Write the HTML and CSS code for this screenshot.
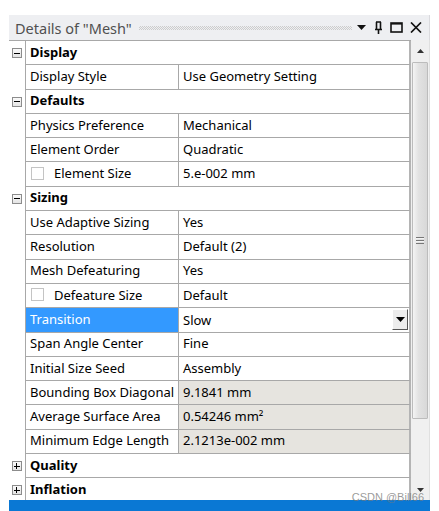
FILE: index.html
```html
<!DOCTYPE html>
<html>
<head>
<meta charset="utf-8">
<link rel="stylesheet" href="styles.css">
</head>
<body>
<div class="panel">
  <div class="titlebar">
    <span class="title">Details of "Mesh"</span>
    <span class="grip"></span>
    <span class="tb-icons">
      <svg class="ic-drop" width="9" height="5" viewBox="0 0 9 5"><path d="M0 0H9L4.5 5Z" fill="#111"/></svg>
      <svg class="ic-pin" width="9" height="13" viewBox="0 0 9 13"><path d="M2 1H7M2.5 1V8M6.5 1V8M1 8.5H8M4.5 8.5V13" stroke="#111" stroke-width="1.6" fill="none"/></svg>
      <svg class="ic-max" width="13" height="11" viewBox="0 0 13 11"><rect x="1" y="1" width="11" height="9" stroke="#111" stroke-width="1.6" fill="none"/><path d="M1 1.8H12" stroke="#111" stroke-width="1.6"/></svg>
      <svg class="ic-x" width="12" height="11" viewBox="0 0 12 11"><path d="M1 0.5L11 10.5M11 0.5L1 10.5" stroke="#111" stroke-width="1.7"/></svg>
    </span>
  </div>
  <div class="body">
    <div class="grid">
      <div class="row cat"><div class="gutter"><span class="exp minus"></span></div><div class="cells"><div class="catname">Display</div></div></div>
      <div class="row"><div class="gutter"></div><div class="cells"><div class="name">Display Style</div><div class="value">Use Geometry Setting</div></div></div>
      <div class="row cat"><div class="gutter"><span class="exp minus"></span></div><div class="cells"><div class="catname">Defaults</div></div></div>
      <div class="row"><div class="gutter"></div><div class="cells"><div class="name">Physics Preference</div><div class="value">Mechanical</div></div></div>
      <div class="row"><div class="gutter"></div><div class="cells"><div class="name">Element Order</div><div class="value">Quadratic</div></div></div>
      <div class="row"><div class="gutter"></div><div class="cells"><div class="name"><span class="check"></span>Element Size</div><div class="value">5.e-002 mm</div></div></div>
      <div class="row cat"><div class="gutter"><span class="exp minus"></span></div><div class="cells"><div class="catname">Sizing</div></div></div>
      <div class="row"><div class="gutter"></div><div class="cells"><div class="name">Use Adaptive Sizing</div><div class="value">Yes</div></div></div>
      <div class="row"><div class="gutter"></div><div class="cells"><div class="name">Resolution</div><div class="value">Default (2)</div></div></div>
      <div class="row"><div class="gutter"></div><div class="cells"><div class="name">Mesh Defeaturing</div><div class="value">Yes</div></div></div>
      <div class="row"><div class="gutter"></div><div class="cells"><div class="name"><span class="check"></span>Defeature Size</div><div class="value">Default</div></div></div>
      <div class="row"><div class="gutter"></div><div class="cells"><div class="name selected">Transition</div><div class="value combo">Slow<span class="dropbtn"><svg width="9" height="5" viewBox="0 0 9 5"><path d="M0 0H9L4.5 5Z" fill="#000"/></svg></span></div></div></div>
      <div class="row"><div class="gutter"></div><div class="cells"><div class="name">Span Angle Center</div><div class="value">Fine</div></div></div>
      <div class="row"><div class="gutter"></div><div class="cells"><div class="name">Initial Size Seed</div><div class="value">Assembly</div></div></div>
      <div class="row"><div class="gutter"></div><div class="cells"><div class="name">Bounding Box Diagonal</div><div class="value ro">9.1841 mm</div></div></div>
      <div class="row"><div class="gutter"></div><div class="cells"><div class="name">Average Surface Area</div><div class="value ro">0.54246 mm²</div></div></div>
      <div class="row"><div class="gutter"></div><div class="cells"><div class="name">Minimum Edge Length</div><div class="value ro">2.1213e-002 mm</div></div></div>
      <div class="row cat"><div class="gutter"><span class="exp plus"></span></div><div class="cells"><div class="catname">Quality</div></div></div>
      <div class="row cat"><div class="gutter"><span class="exp plus"></span></div><div class="cells"><div class="catname">Inflation</div></div></div>
    </div>
    <div class="scrollbar">
      <div class="sb-btn"><svg width="7" height="4" viewBox="0 0 7 4"><path d="M0 4H7L3.5 0Z" fill="#333"/></svg></div>
      <div class="thumb"><span class="grips"></span></div>
      <div class="track"></div>
      <div class="sb-btn down"><svg width="7" height="4" viewBox="0 0 7 4"><path d="M0 0H7L3.5 4Z" fill="#333"/></svg></div>
    </div>
  </div>
  <div class="statusbar"></div>
  <div class="watermark">CSDN @Bill66</div>
</div>
</body>
</html>
```
FILE: styles.css
```css
html, body {
  margin: 0;
  padding: 0;
  background: #fff;
}
body {
  width: 439px;
  height: 511px;
  overflow: hidden;
  font-family: "Noto Sans", "Open Sans", sans-serif;
  font-size: 13px;
  color: #000;
}
.panel {
  position: relative;
  margin: 15px 0 0 9px;
  width: 421px;
  height: 496px;
  display: flex;
  flex-direction: column;
  overflow: hidden;
}
.titlebar {
  height: 25px;
  flex: none;
  background: #eeeff2;
  display: flex;
  align-items: center;
  box-sizing: border-box;
  border-right: 1px solid #dadade;
}
.title {
  padding-left: 6px;
  font-size: 14.5px;
  color: #505050;
  white-space: nowrap;
}
.grip {
  flex: 1;
  height: 4px;
  margin: 0 5px 0 7px;
  background: repeating-conic-gradient(#cccccc 0 25%, transparent 0 50%) 0 0 / 2px 2px;
}
.tb-icons {
  display: flex;
  align-items: center;
  gap: 7px;
  padding-right: 7px;
}
.ic-pin { margin-left: 1px; }
.body {
  flex: 1;
  display: flex;
  min-height: 0;
}
.grid {
  width: 402px;
  flex: none;
  border-top: 1px solid #a8a8a8;
}
.row {
  display: flex;
  height: 24.3px;
}
.gutter {
  width: 16px;
  flex: none;
  display: flex;
  align-items: center;
  justify-content: center;
  box-sizing: border-box;
  padding-right: 1px;
}
.cells {
  flex: 1;
  display: flex;
  box-sizing: border-box;
  border-left: 1px solid #a8a8a8;
  border-right: 2px solid #b4b4b4;
  border-bottom: 1px solid #a8a8a8;
}
.catname {
  font-weight: bold;
  padding-left: 4px;
  padding-bottom: 2px;
  display: flex;
  align-items: center;
}
.name {
  width: 153px;
  flex: none;
  box-sizing: border-box;
  border-right: 1px solid #a8a8a8;
  padding-left: 4px;
  padding-bottom: 2px;
  display: flex;
  align-items: center;
  white-space: nowrap;
}
.name.selected {
  background: #3399ff;
  color: #fff;
}
.value {
  flex: 1;
  padding-left: 4px;
  padding-bottom: 2px;
  display: flex;
  align-items: center;
  white-space: nowrap;
}
.value.ro {
  background: #e6e4df;
}
.value.combo {
  justify-content: space-between;
  padding-bottom: 0;
}
.dropbtn {
  width: 16px;
  height: 21px;
  box-sizing: border-box;
  background: #ececec;
  border-top: 1px solid #fff;
  border-left: 1px solid #fff;
  border-right: 1px solid #555;
  border-bottom: 1px solid #555;
  display: flex;
  align-items: center;
  justify-content: center;
  margin-right: 1px;
}
.check {
  width: 13px;
  height: 13px;
  box-sizing: border-box;
  border: 1px solid #c4c4c4;
  background: #fff;
  margin: 0 10px 0 1px;
  flex: none;
}
.exp {
  position: relative;
  width: 10px;
  height: 10px;
  box-sizing: border-box;
  border: 1px solid #8c8c8c;
  background: linear-gradient(#fafafa, #e4e4e4);
}
.exp::before {
  content: "";
  position: absolute;
  left: 1px;
  top: 3.5px;
  width: 6px;
  height: 1px;
  background: #000;
}
.exp.plus::after {
  content: "";
  position: absolute;
  left: 3.5px;
  top: 1px;
  width: 1px;
  height: 6px;
  background: #000;
}
.scrollbar {
  width: 19px;
  flex: none;
  display: flex;
  flex-direction: column;
  background: #f0f0f0;
  box-sizing: border-box;
  border-right: 1px solid #e0e0e0;
}
.sb-btn {
  height: 22px;
  flex: none;
  display: flex;
  align-items: center;
  justify-content: center;
}
.sb-btn.down {
  height: 20px;
  align-items: flex-start;
  padding-top: 8px;
  box-sizing: border-box;
}
.thumb {
  height: 357px;
  flex: none;
  margin: 0 1px 0 1px;
  box-sizing: border-box;
  border: 1px solid #bcbcbc;
  border-radius: 1px;
  background: linear-gradient(to right, #f4f4f4, #e2e2e2 40%, #d8d8d8 100%);
  display: flex;
  align-items: center;
  justify-content: center;
}
.grips {
  width: 8px;
  height: 7px;
  background: repeating-linear-gradient(#777 0 1px, #f4f4f4 1px 2px, transparent 2px 3px);
}
.track {
  flex: 1;
}
.statusbar {
  height: 11px;
  flex: none;
  background: #0a78d4;
}
.watermark {
  position: absolute;
  right: 6px;
  bottom: 8px;
  font-family: "Liberation Sans", Arial, sans-serif;
  font-size: 11px;
  color: rgba(120, 120, 120, 0.75);
}
```
